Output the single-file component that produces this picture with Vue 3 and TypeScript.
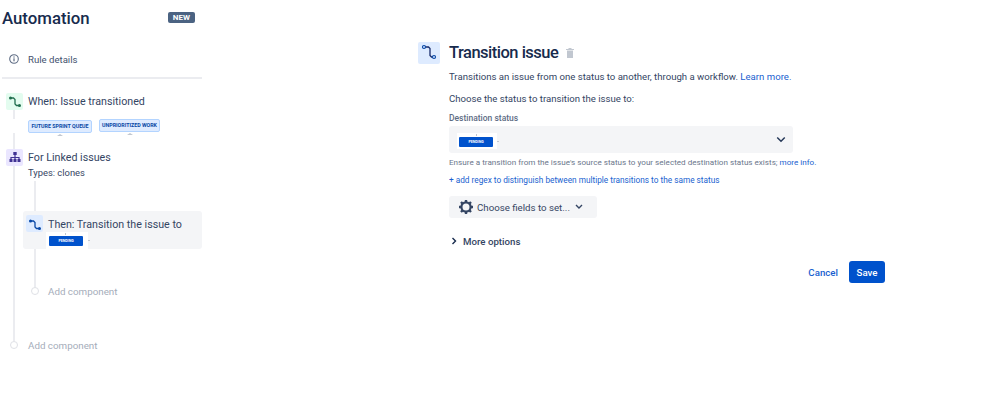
<script setup lang="ts">
const transitionPath = 'M3.500 5H6.500L8 6.500V11L9.500 12.500H12.500';
</script>

<template>
  <div class="page">
    <aside class="side">
      <div class="head">
        <h1>Automation</h1>
        <span class="new">NEW</span>
      </div>
      <div class="details">
        <svg class="info" viewBox="0 0 12 12" width="12" height="12">
          <circle cx="6" cy="6" r="4.300" fill="none" stroke="#5e6c84" stroke-width="1.100" />
          <rect x="5.400" y="5.300" width="1.200" height="3" fill="#5e6c84" />
          <rect x="5.400" y="3.400" width="1.200" height="1.200" fill="#5e6c84" />
        </svg>
        <span>Rule details</span>
      </div>
      <div class="tree">
        <div class="line outer"></div>
        <div class="line inner"></div>
        <div class="node when">
          <span class="ico green">
            <svg viewBox="0 0 16 16" width="16" height="16"><path :d="transitionPath" fill="none" stroke="#216e4e" stroke-width="1.300" /><circle cx="3.500" cy="5" r="1.500" fill="#216e4e" /><circle cx="12.500" cy="12.500" r="1.500" fill="#216e4e" /></svg>
          </span>
          <span class="name">When: Issue transitioned</span>
        </div>
        <div class="chips">
          <span class="chip first">FUTURE SPRINT QUEUE</span>
          <span class="chip second">UNPRIORITIZED WORK</span>
        </div>
        <div class="node linked">
          <span class="ico purple">
            <svg viewBox="0 0 16 16" width="16" height="16"><path d="M8 5v3M4 11V8.500h8V11M8 8.500V11" fill="none" stroke="#403294" stroke-width="1.200" /><rect x="6.300" y="3" width="3.400" height="3" fill="#403294" /><rect x="2.500" y="10" width="3" height="3" fill="#403294" /><rect x="6.500" y="10" width="3" height="3" fill="#403294" /><rect x="10.500" y="10" width="3" height="3" fill="#403294" /></svg>
          </span>
          <span class="name">For Linked issues</span>
        </div>
        <div class="types">Types: clones</div>
        <div class="then">
          <div class="then-row">
            <span class="ico blue">
              <svg viewBox="0 0 16 16" width="16" height="16"><path :d="transitionPath" fill="none" stroke="#0747a6" stroke-width="1.300" /><circle cx="3.500" cy="5" r="1.500" fill="#0747a6" /><circle cx="12.500" cy="12.500" r="1.500" fill="#0747a6" /></svg>
            </span>
            <span class="name">Then: Transition the issue to</span>
          </div>
          <div class="halo"><span class="pending">PENDING</span></div>
        </div>
        <div class="add inner-add"><i class="dot"></i><span>Add component</span></div>
        <div class="add outer-add"><i class="dot"></i><span>Add component</span></div>
      </div>
    </aside>

    <main class="main">
      <span class="big-ico">
        <svg viewBox="0 0 22 22" width="22" height="22"><path d="M7.500 5h3L12 6.500v7L13.500 15h1" fill="none" stroke="#172b6b" stroke-width="1.300" /><circle cx="6" cy="5" r="1.500" fill="none" stroke="#0747a6" stroke-width="1.200" /><circle cx="16" cy="15" r="1.500" fill="none" stroke="#0747a6" stroke-width="1.200" /></svg>
      </span>
      <div class="content">
        <div class="title-row">
          <h2>Transition issue</h2>
          <svg class="trash" viewBox="0 0 10 12" width="10" height="12"><path d="M1 2h8v1H1zM3.500 1h3v1h-3zM2 3.500h6V11H2z" fill="#c1c7d0" /></svg>
        </div>
        <p class="desc">Transitions an issue from one status to another, through a workflow. <a>Learn more.</a></p>
        <p class="choose">Choose the status to transition the issue to:</p>
        <label class="label">Destination status</label>
        <div class="select">
          <div class="halo"><span class="pending">PENDING</span></div>
          <svg viewBox="0 0 12 8" width="10" height="7"><path d="M1.500 1.500L6 6l4.500-4.500" fill="none" stroke="#253858" stroke-width="1.800" /></svg>
        </div>
        <p class="help">Ensure a transition from the issue's source status to your selected destination status exists; <a>more info.</a></p>
        <a class="regex">+ add regex to distinguish between multiple transitions to the same status</a>
        <div class="fields">
          <svg viewBox="0 0 16 16" width="16" height="16"><circle cx="8" cy="8" r="4.600" fill="none" stroke="#344563" stroke-width="2.200" /><path d="M8 1v2.500M8 12.500V15M1 8h2.500M12.500 8H15M3 3l1.800 1.800M11.200 11.200L13 13M3 13l1.800-1.800M11.200 4.800L13 3" stroke="#344563" stroke-width="2.400" /></svg>
          <span>Choose fields to set...</span>
          <svg viewBox="0 0 8 6" width="8" height="6"><path d="M1 1l3 3 3-3" fill="none" stroke="#344563" stroke-width="1.400" /></svg>
        </div>
        <div class="more">
          <svg viewBox="0 0 6 8" width="6" height="8"><path d="M1.500 1l3 3-3 3" fill="none" stroke="#172b4d" stroke-width="1.400" /></svg>
          <span>More options</span>
        </div>
        <div class="actions">
          <a class="cancel">Cancel</a>
          <button class="save" type="button">Save</button>
        </div>
      </div>
    </main>
  </div>
</template>

<style>
html, body { margin: 0; background: #fff; }
</style>

<style scoped>
.page {
  width: 999px; height: 403px; overflow: hidden; display: flex;
  font-family: Roboto, "Noto Sans", sans-serif; color: #172b4d; background: #fff;
}
.side { width: 200px; margin-left: 2px; flex: none; }
.head { display: flex; justify-content: space-between; align-items: center; height: 24px; margin-top: 6px; padding-right: 7px; }
h1 { margin: 0; font-size: 16.800px; font-weight: 500; line-height: 24px; color: #172b4d; }
.new { background: #4b6382; color: #fff; font-size: 8px; font-weight: 700; line-height: 11px; padding: 0 5px; border-radius: 2px; margin-top: -2px; }
.details { display: flex; align-items: center; gap: 8px; height: 20px; margin-top: 19px; padding-left: 6px; font-size: 9.600px; color: #42526e; padding-bottom: 8px; border-bottom: 2px solid #ebecf0; }
.tree { position: relative; padding-top: 13px; }
.line { position: absolute; width: 2px; background: #ebecf0; }
.outer { left: 11px; top: 30px; height: 232px; }
.inner { left: 32px; top: 102px; height: 107px; }
.node, .then-row { display: flex; align-items: center; gap: 5px; position: relative; }
.node { padding-left: 4px; height: 18px; }
.ico { width: 17px; height: 17px; display: flex; align-items: center; justify-content: center; border-radius: 2px; flex: none; }
.green { background: #e3fcef; }
.purple { background: #eae6ff; }
.blue { background: #deebff; }
.name { font-size: 10.700px; color: #344563; white-space: nowrap; }
.chips { display: flex; gap: 7px; padding-left: 26px; height: 14px; margin-top: 9px; position: relative; background: #fff; width: 140px; }
.chip { position: relative; height: 13px; box-sizing: border-box; background: #deebff; border: 1px solid #b3d4ff; border-radius: 2px; color: #0747a6; font-size: 5.300px; font-weight: 700; line-height: 11px; text-align: center; white-space: nowrap; }
.chip::after { content: ""; position: absolute; left: 50%; bottom: -4px; margin-left: -3px; border: 3px solid transparent; border-top: 0; border-bottom: 2px solid #c1c7d0; }
.first { width: 64px; margin-top: 1px; }
.second { width: 61px; }
.linked { margin-top: 15px; }
.types { margin: 0 0 0 26px; font-size: 9.400px; line-height: 13px; color: #344563; background: #fff; position: relative; }
.then { position: relative; margin: 32px 0 0 21px; height: 38px; background: #f4f5f7; border-radius: 3px; box-sizing: border-box; padding: 4px 3px; }
.then .name { margin: 2px 0 0; }
.then-row { gap: 5px; }
.halo { position: relative; display: inline-block; background: #fff; padding: 4px 4px 2px 2px; line-height: 0; margin-top: 3px; }
.halo::before { content: ""; position: absolute; left: 19px; top: 1px; width: 1px; height: 2px; background: #c1c7d0; }
.halo::after { content: ""; position: absolute; right: -2px; top: 8px; width: 2px; height: 1px; background: #c1c7d0; }
.then .halo { position: absolute; left: 23px; top: 21px; padding: 4px 5px 3px 3px; margin: 0; }
.pending { display: inline-block; width: 34px; height: 10px; background: #0052cc; border-radius: 1px; color: #fff; font-size: 3.600px; font-weight: 700; line-height: 10px; text-align: center; }
.add { position: relative; display: flex; align-items: center; font-size: 9.800px; color: #a5adba; height: 16px; }
.dot { width: 6px; height: 6px; border: 1px solid #dfe1e6; border-radius: 50%; background: #fff; flex: none; }
.inner-add { margin: 34px 0 0 29px; gap: 9px; }
.outer-add { margin: 38px 0 0 8px; gap: 10px; }

.main { margin-left: 216px; display: flex; gap: 9px; padding-top: 42px; align-items: flex-start; }
.big-ico { width: 22px; height: 22px; background: #deebff; border-radius: 2px; flex: none; }
.content { width: 436px; }
.title-row { display: flex; align-items: center; gap: 7px; height: 22px; }
h2 { margin: 0; font-size: 16.500px; font-weight: 500; letter-spacing: -0.500px; color: #172b4d; line-height: 22px; }
p { margin: 0; }
a { color: #1a5fd0; }
.desc, .choose { font-size: 9.600px; line-height: 14px; color: #344563; white-space: nowrap; }
.desc { margin-top: 6px; }
.choose { margin-top: 8px; }
.label { display: block; font-size: 8.500px; font-weight: 500; color: #5e6c84; line-height: 12px; margin-top: 6px; }
.select { width: 344px; height: 27px; box-sizing: border-box; margin-top: 2px; padding: 0 7px 0 8px; background: #f4f5f7; border-radius: 3px; display: flex; align-items: center; justify-content: space-between; }
.help { margin-top: 3px; font-size: 8.120px; line-height: 12px; color: #6b778c; white-space: nowrap; }
.regex { display: block; margin-top: 6px; font-size: 8.250px; line-height: 12px; white-space: nowrap; }
.fields { margin-top: 10px; width: 148px; height: 22px; box-sizing: border-box; padding-left: 9px; background: #f4f5f7; border-radius: 3px; display: flex; align-items: center; gap: 3px; font-size: 9.700px; color: #344563; }
.fields span { margin: 0 2px 0 0; }
.more { display: flex; align-items: center; gap: 6px; height: 14px; margin-top: 16px; padding-left: 2px; font-size: 9.700px; font-weight: 500; color: #344563; }
.actions { display: flex; justify-content: flex-end; align-items: center; gap: 11px; margin-top: 13px; }
.cancel { font-size: 9.700px; font-weight: 500; }
.save { width: 36px; height: 22px; padding: 0; border: 0; background: #0052cc; color: #fff; border-radius: 3px; font: 500 9.700px Roboto, sans-serif; }
</style>
